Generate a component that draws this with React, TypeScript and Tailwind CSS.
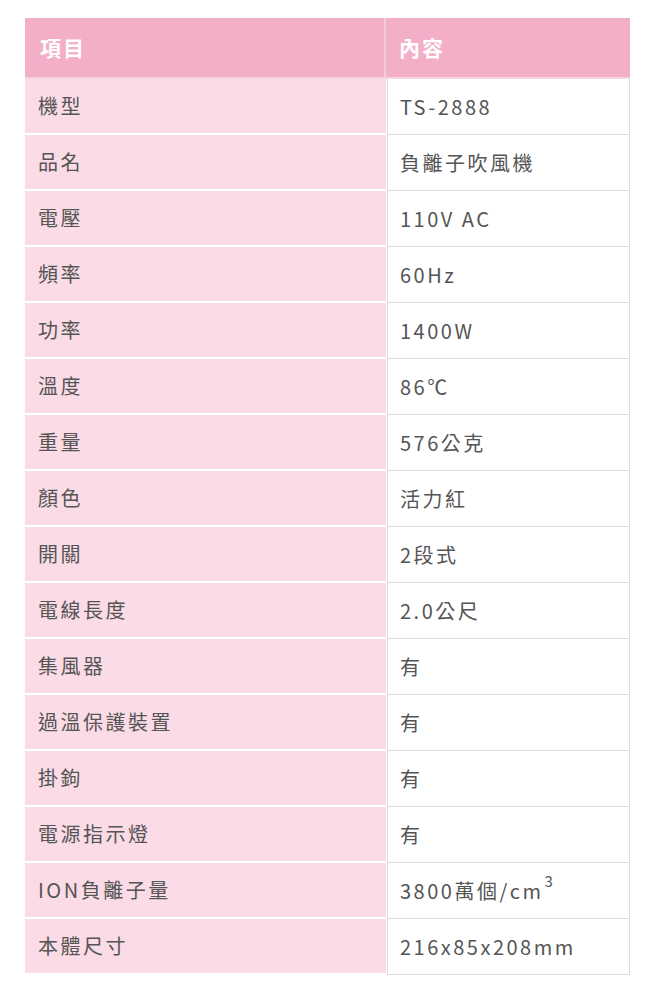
import React from "react";

const rows: [string, React.ReactNode][] = [
  ["機型", "TS-2888"],
  ["品名", "負離子吹風機"],
  ["電壓", "110V AC"],
  ["頻率", "60Hz"],
  ["功率", "1400W"],
  ["溫度", "86℃"],
  ["重量", "576公克"],
  ["顏色", "活力紅"],
  ["開關", "2段式"],
  ["電線長度", "2.0公尺"],
  ["集風器", "有"],
  ["過溫保護裝置", "有"],
  ["掛鉤", "有"],
  ["電源指示燈", "有"],
  [
    "ION負離子量",
    <>
      3800萬個/cm<span className="text-[15px] relative -top-[9px] ml-px">3</span>
    </>,
  ],
  ["本體尺寸", "216x85x208mm"],
];

export default function App() {
  return (
    <div
      className="bg-white w-[650px] h-[994px] pt-[18px] pl-[25px]"
      style={{ fontFamily: '"Noto Sans CJK TC", "Noto Sans", sans-serif' }}
    >
      <div className="w-[605px] flex flex-col">
        <div className="flex h-[61px] bg-[#f4afc8] text-white font-bold text-[21px] tracking-[2px] border-b-2 border-[#f6d5e1]">
          <div className="w-[361px] flex items-center pl-[15px] border-r-2 border-[#f1cbd9]">項目</div>
          <div className="flex-1 flex items-center pl-[13px]">內容</div>
        </div>
        {rows.map(([k, v], i) => (
          <div key={i} className="flex h-[56px] text-[20px] text-[#555] tracking-[2.5px]">
            <div className="w-[361px] flex items-center pl-[13px] bg-[#fadbe6] border-b-2 border-white">{k}</div>
            <div className="flex-1 flex items-center pl-[12px] bg-white border-l border-r border-b border-[#dcdcdc] ml-px">
              {v}
            </div>
          </div>
        ))}
      </div>
    </div>
  );
}
